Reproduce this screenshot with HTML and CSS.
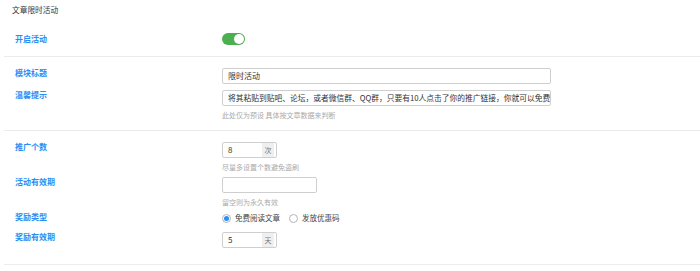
FILE: index.html
```html
<!DOCTYPE html>
<html lang="zh-CN">
<head>
<meta charset="utf-8">
<title>文章限时活动</title>
<link rel="stylesheet" href="styles.css">
</head>
<body>
<div class="page">
  <div class="title">文章限时活动</div>

  <div class="section s1">
    <div class="group center">
      <div class="label">开启活动</div>
      <div class="control"><span class="switch"><span class="knob"></span></span></div>
    </div>
  </div>

  <div class="section s2">
    <div class="group">
      <div class="label">模块标题</div>
      <div class="control"><div class="input wide">限时活动</div></div>
    </div>
    <div class="group">
      <div class="label">温馨提示</div>
      <div class="control">
        <div class="input wide long">将其粘贴到贴吧、论坛，或者微信群、QQ群，只要有10人点击了你的推广链接，你就可以免费</div>
        <div class="help">此处仅为预设 具体按文章数据来判断</div>
      </div>
    </div>
  </div>

  <div class="section s3">
    <div class="group">
      <div class="label">推广个数</div>
      <div class="control">
        <div class="input addon-input"><span class="val">8</span><span class="addon">次</span></div>
        <div class="help">尽量多设置个数避免盗刷</div>
      </div>
    </div>
    <div class="group">
      <div class="label">活动有效期</div>
      <div class="control">
        <div class="input mid"></div>
        <div class="help">留空则为永久有效</div>
      </div>
    </div>
    <div class="group">
      <div class="label">奖励类型</div>
      <div class="control radios">
        <span class="radio checked"><span class="dot"></span></span><span class="rtext">免费阅读文章</span>
        <span class="radio"></span><span class="rtext">发放优惠码</span>
      </div>
    </div>
    <div class="group">
      <div class="label">奖励有效期</div>
      <div class="control">
        <div class="input addon-input"><span class="val">5</span><span class="addon">天</span></div>
      </div>
    </div>
  </div>
</div>
</body>
</html>
```

FILE: styles.css
```css
* { box-sizing: border-box; }

body {
  margin: 0;
  background: #fff;
  font-family: "Noto Sans CJK SC", "Noto Sans", sans-serif;
  font-size: 8px;
  color: #333;
}

.page {
  padding-left: 4px;
}

.title {
  margin-top: 4px;
  padding-left: 8px;
  line-height: 12px;
  height: 12px;
  font-size: 7.7px;
  color: #333;
}

.section {
  border-bottom: 1px solid #ececec;
  display: flex;
  flex-direction: column;
}

.s1 { padding: 17px 0 11px; }
.s2 { padding: 11px 0 10px; gap: 6px; }
.s3 { padding: 11px 0 16px; gap: 5px; }

.group {
  display: grid;
  grid-template-columns: 218px 1fr;
  align-items: start;
}

.group.center { align-items: center; }

.label {
  padding-left: 11px;
  line-height: 10px;
  font-weight: bold;
  color: #2a8ef5;
  font-size: 8px;
}

.switch {
  display: flex;
  justify-content: flex-end;
  align-items: center;
  width: 23px;
  height: 12px;
  border-radius: 6px;
  background: #4cb050;
  padding: 0 1px;
}

.knob {
  width: 10px;
  height: 10px;
  border-radius: 50%;
  background: #fff;
}

.input {
  height: 16px;
  border: 1px solid #cfcfcf;
  border-radius: 2px;
  padding: 0 5px;
  line-height: 14px;
  font-size: 8px;
  color: #333;
  white-space: nowrap;
  overflow: hidden;
}

.input.long {
  font-size: 7.75px;
  padding-right: 2px;
}

.wide { width: 329px; }
.mid { width: 95px; }

.addon-input {
  width: 55px;
  display: flex;
  align-items: stretch;
  padding-right: 2px;
}

.addon-input .val { flex: 1; }

.addon {
  width: 12px;
  background: #efefef;
  color: #777;
  font-size: 7px;
  text-align: center;
  line-height: 14px;
}

.help {
  margin-top: 4px;
  line-height: 10px;
  font-size: 7px;
  color: #aaa;
}

.radios {
  display: flex;
  align-items: center;
  height: 15px;
  padding-bottom: 3px;
}

.radio {
  width: 9px;
  height: 9px;
  border-radius: 50%;
  border: 1px solid #b5b5b5;
  display: flex;
  align-items: center;
  justify-content: center;
  margin-right: 4px;
}

.radio .dot {
  width: 5px;
  height: 5px;
  border-radius: 50%;
  background: #2a8ef5;
}

.rtext {
  font-size: 7.5px;
  color: #444;
  line-height: 12px;
  margin-right: 9px;
}
```
